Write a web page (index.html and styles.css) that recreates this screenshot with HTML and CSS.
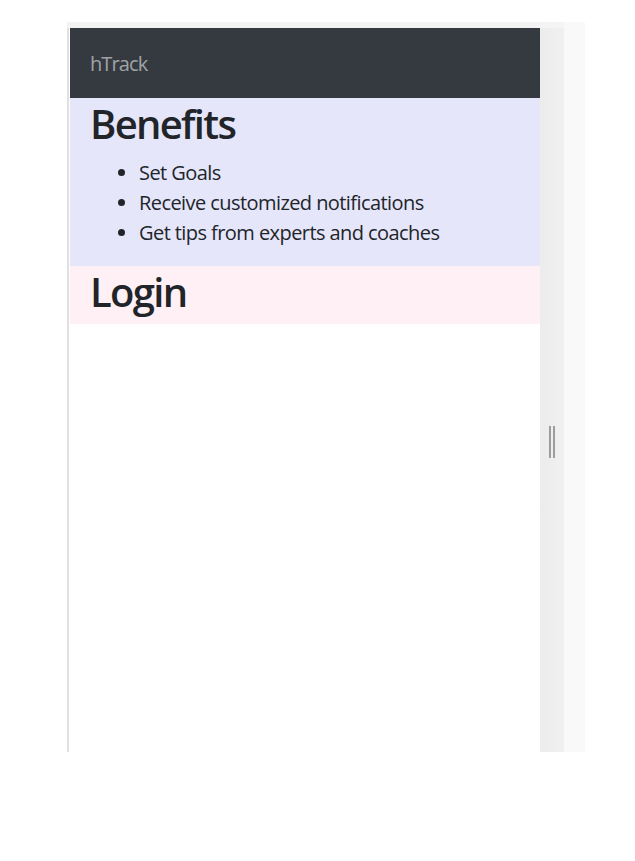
FILE: index.html
```html
<!DOCTYPE html>
<html lang="en">
<head>
<meta charset="utf-8">
<title>hTrack</title>
<link rel="stylesheet" href="styles.css">
</head>
<body>
<div class="stage">
  <div class="device">
    <div class="viewport">
      <nav class="navbar">
        <span class="brand">hTrack</span>
      </nav>
      <section class="benefits">
        <h1 class="title">Benefits</h1>
        <ul class="list">
          <li>Set Goals</li>
          <li>Receive customized notifications</li>
          <li>Get tips from experts and coaches</li>
        </ul>
      </section>
      <section class="login">
        <h1 class="title">Login</h1>
      </section>
    </div>
  </div>
  <div class="handle">
    <span class="grip"></span>
    <span class="grip"></span>
  </div>
  <div class="gutter"></div>
</div>
</body>
</html>
```

FILE: styles.css
```css
* { box-sizing: border-box; }

html, body {
  margin: 0;
  padding: 0;
  background: #ffffff;
}

body {
  font-family: "Open Sans", "Noto Sans", sans-serif;
  color: #212529;
}

.stage {
  display: flex;
  margin: 22px 0 0 67px;
  width: 518px;
  height: 730px;
}

.device {
  width: 473px;
  display: flex;
  flex-direction: column;
  background: #f3f3f3;
  padding-top: 6px;
}

.viewport {
  flex: 1;
  background: #ffffff;
  border-left: 2px solid #e0e0e0;
  padding-left: 1px;
  display: flex;
  flex-direction: column;
}

.navbar {
  height: 70px;
  background: #343a40;
  display: flex;
  align-items: center;
  padding-left: 20px;
}

.brand {
  font-size: 20px;
  color: rgba(255, 255, 255, 0.55);
  letter-spacing: -0.9px;
}

.benefits {
  background: #e6e6fa;
  padding: 2px 20px 0;
}

.login {
  background: #fff0f5;
  padding: 2px 20px 0;
}

.title {
  margin: 0 0 8px;
  font-size: 40px;
  line-height: 48px;
  font-weight: 600;
  letter-spacing: -1.7px;
}

.list {
  margin: 10px 0 18px;
  padding-left: 49px;
  font-size: 20px;
  line-height: 30px;
  letter-spacing: -0.57px;
}

.handle {
  width: 24px;
  background: linear-gradient(to right, #ececec, #f0f0f0);
  border-top: 6px solid #f4f4f4;
  display: flex;
  justify-content: center;
  align-items: flex-start;
  gap: 2px;
  padding-top: 398px;
}

.grip {
  width: 2px;
  height: 32px;
  background: #9c9c9c;
}

.gutter {
  width: 21px;
  background: #f9f9f9;
}
```
